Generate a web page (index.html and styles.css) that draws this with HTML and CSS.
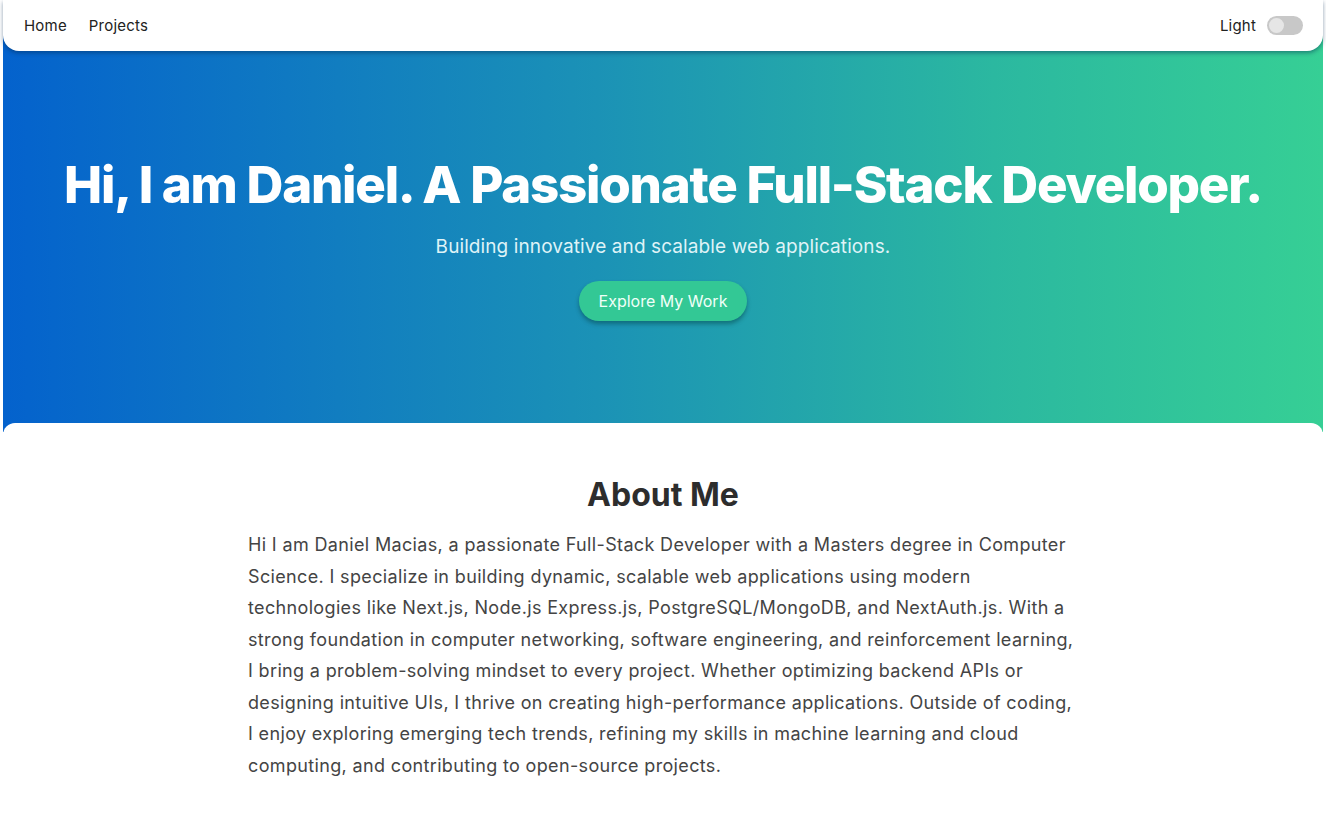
FILE: index.html
```html
<!DOCTYPE html>
<html lang="en">
<head>
<meta charset="utf-8">
<title>Daniel Macias</title>
<link rel="stylesheet" href="styles.css">
</head>
<body>
<div class="page">
  <header class="navbar">
    <nav class="nav-links">
      <a href="#" class="nav-link">Home</a>
      <a href="#" class="nav-link">Projects</a>
    </nav>
    <div class="theme">
      <span class="theme-label">Light</span>
      <span class="toggle"><span class="knob"></span></span>
    </div>
  </header>
  <section class="hero">
    <h1 class="hero-title">Hi, I am Daniel. A Passionate Full-Stack Developer.</h1>
    <p class="hero-sub">Building innovative and scalable web applications.</p>
    <a href="#" class="hero-btn">Explore My Work</a>
  </section>
  <section class="about">
    <h2 class="about-title">About Me</h2>
    <p class="about-text">Hi I am Daniel Macias, a passionate Full-Stack Developer with a Masters degree in Computer Science. I specialize in building dynamic, scalable web applications using modern technologies like Next.js, Node.js Express.js, PostgreSQL/MongoDB, and NextAuth.js. With a strong foundation in computer networking, software engineering, and reinforcement learning, I bring a problem-solving mindset to every project. Whether optimizing backend APIs or designing intuitive UIs, I thrive on creating high-performance applications. Outside of coding, I enjoy exploring emerging tech trends, refining my skills in machine learning and cloud computing, and contributing to open-source projects.</p>
  </section>
</div>
</body>
</html>
```
FILE: styles.css
```css
* { box-sizing: border-box; }
html, body { margin: 0; padding: 0; background: #ffffff; }
body {
  font-family: Inter, "Noto Sans", "Liberation Sans", sans-serif;
  color: #333;
}
.page {
  margin: 0 3px;
  position: relative;
}
.navbar {
  position: absolute;
  top: 0; left: 0; right: 0;
  z-index: 2;
  height: 51px;
  background: #fff;
  border-radius: 0 0 16px 16px;
  box-shadow: 0 2px 4px rgba(0, 40, 80, 0.45);
  display: flex;
  align-items: center;
  justify-content: space-between;
  padding: 0 20px 0 21px;
}
.nav-links { display: flex; gap: 22px; }
.nav-link {
  color: #222;
  text-decoration: none;
  font-size: 15px;
  letter-spacing: 0.2px;
}
.theme { display: flex; align-items: center; gap: 11px; }
.theme-label { font-size: 15px; color: #222; letter-spacing: 0.2px; }
.toggle {
  width: 36px; height: 19px;
  border-radius: 10px;
  background: #c8c8c8;
  display: flex; align-items: center;
  padding: 0 2px;
}
.knob {
  width: 15px; height: 15px; border-radius: 50%;
  background: #e6e6e6;
}
.hero {
  height: 432px;
  background: linear-gradient(90deg, #0462cd 0%, #1b92b6 45%, #2bb8a0 75%, #36cf95 100%);
  display: flex;
  flex-direction: column;
  align-items: center;
  padding-top: 155px;
  color: #fff;
}
.hero-title {
  margin: 0;
  font-size: 51px;
  font-weight: 800;
  letter-spacing: -1.25px;
  line-height: 60px;
}
.hero-sub {
  margin: 20px 0 0;
  font-size: 19px;
  letter-spacing: 0.1px;
  color: #dff3f7;
}
.hero-btn {
  margin-top: 23px;
  display: inline-block;
  padding: 0 20px;
  height: 40px;
  line-height: 40px;
  border-radius: 20px;
  background: #33c895;
  color: #f0fff8;
  font-size: 16px;
  text-decoration: none;
  box-shadow: 0 3px 4px rgba(0, 60, 60, 0.45);
}
.about {
  margin-top: -9px;
  position: relative;
  background: #fff;
  border-radius: 12px 12px 0 0;
  padding: 52px 0 60px;
  display: flex;
  flex-direction: column;
  align-items: center;
}
.about-title {
  margin: 0;
  font-size: 32px;
  font-weight: 700;
  color: #2d2d2d;
  line-height: 40px;
}
.about-text {
  margin: 14px 0 0;
  width: 830px;
  font-size: 18px;
  letter-spacing: 0.35px;
  line-height: 31.5px;
  color: #444;
}
```
